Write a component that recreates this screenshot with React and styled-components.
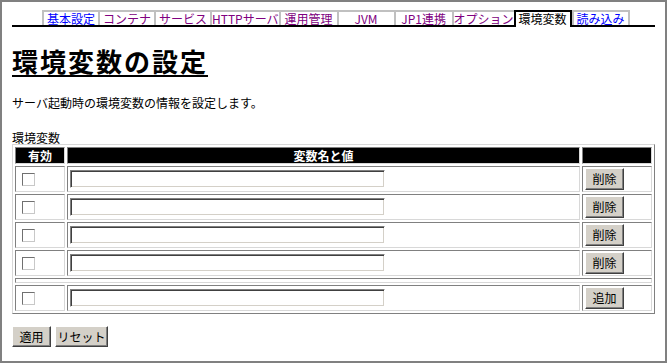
import styled, { createGlobalStyle } from 'styled-components';

const GlobalStyle = createGlobalStyle`
  html, body {
    margin: 0;
    padding: 0;
    background: #fff;
  }
  body {
    font-family: 'Noto Sans CJK JP', 'DejaVu Sans', sans-serif;
    font-size: 12px;
    color: #000;
  }
`;

const tabs = [
  { label: '基本設定', width: 56, kind: 'link' },
  { label: 'コンテナ', width: 56, kind: 'visited' },
  { label: 'サービス', width: 56, kind: 'visited' },
  { label: 'HTTPサーバ', width: 67, kind: 'visited' },
  { label: '運用管理', width: 58, kind: 'visited' },
  { label: 'JVM', width: 57, kind: 'visited' },
  { label: 'JP1連携', width: 58, kind: 'visited' },
  { label: 'オプション', width: 59, kind: 'visited' },
  { label: '環境変数', width: 58, kind: 'active' },
  { label: '読み込み', width: 58, kind: 'link', last: true },
];

const tabColors = {
  link: '#0000ff',
  visited: '#800080',
  active: '#000000',
};

const rows = [1, 2, 3, 4];

const App = () => {
  return (
    <Page>
      <GlobalStyle />
      <TabBar>
        {tabs.map((t) => (
          <Tab
            key={t.label}
            $width={t.width}
            $active={t.kind === 'active'}
            $last={t.last}
            $color={tabColors[t.kind]}
          >
            {t.label}
          </Tab>
        ))}
      </TabBar>

      <Heading>環境変数の設定</Heading>
      <Description>サーバ起動時の環境変数の情報を設定します。</Description>
      <Label>環境変数</Label>

      <VarTable>
        <thead>
          <tr>
            <HeadCell $width={50}>有効</HeadCell>
            <HeadCell $width={513}>変数名と値</HeadCell>
            <HeadCell $width={70}></HeadCell>
          </tr>
        </thead>
        <tbody>
          {rows.map((r) => (
            <tr key={r}>
              <Cell>
                <Check type="checkbox" />
              </Cell>
              <Cell>
                <TextInput type="text" />
              </Cell>
              <Cell>
                <Button $width={39}>削除</Button>
              </Cell>
            </tr>
          ))}
          <tr>
            <SpacerCell colSpan={3} />
          </tr>
          <tr>
            <Cell>
              <Check type="checkbox" />
            </Cell>
            <Cell>
              <TextInput type="text" />
            </Cell>
            <Cell>
              <Button $width={39}>追加</Button>
            </Cell>
          </tr>
        </tbody>
      </VarTable>

      <Actions>
        <Button $width={39}>適用</Button>
        <Button $width={53}>リセット</Button>
      </Actions>
    </Page>
  );
};

const Page = styled.div`
  box-sizing: border-box;
  width: 667px;
  height: 363px;
  border: 2px solid #808080;
  padding: 10px 0 0 10px;
  overflow: hidden;
`;

const TabBar = styled.div`
  display: flex;
  align-items: flex-end;
  width: 643px;
  height: 15px;
  padding-left: 30px;
  box-sizing: border-box;
  border-bottom: 2px solid #000;
`;

const Tab = styled.div`
  box-sizing: border-box;
  flex: 0 0 ${(p) => p.$width}px;
  height: ${(p) => (p.$active ? 17 : 15)}px;
  margin-bottom: ${(p) => (p.$active ? -2 : 0)}px;
  border-top: 2px solid ${(p) => (p.$active ? '#000' : '#c0c0c0')};
  border-left: 2px solid ${(p) => (p.$active ? '#000' : '#c0c0c0')};
  border-right: ${(p) =>
    p.$active ? '2px solid #000' : p.$last ? '2px solid #c0c0c0' : 'none'};
  background: #fff;
  color: ${(p) => p.$color};
  font-size: 12px;
  line-height: 13px;
  text-align: center;
  white-space: nowrap;
  cursor: ${(p) => (p.$active ? 'default' : 'pointer')};
`;

const Heading = styled.h1`
  margin: 18px 0 0;
  font-size: 26px;
  line-height: 32px;
  font-weight: bold;
  letter-spacing: 2px;
  text-decoration: underline;
  text-underline-offset: 3px;
  text-decoration-thickness: 2px;
`;

const Description = styled.p`
  margin: 18px 0 0;
  font-size: 12px;
  line-height: 16px;
`;

const Label = styled.div`
  margin-top: 20px;
  font-size: 12px;
  line-height: 13px;
`;

const VarTable = styled.table`
  margin-top: 0;
  width: 643px;
  border-collapse: separate;
  border-spacing: 2px;
  border: 1px solid;
  border-color: #d8d8d8 #808080 #808080 #d8d8d8;
  table-layout: fixed;
`;

const HeadCell = styled.th`
  box-sizing: border-box;
  width: ${(p) => p.$width}px;
  height: 17px;
  padding: 0;
  background: #000;
  color: #fff;
  font-size: 12px;
  font-weight: bold;
  line-height: 15px;
  text-align: center;
  border: 1px solid;
  border-color: #808080 #d8d8d8 #d8d8d8 #808080;
`;

const Cell = styled.td`
  box-sizing: border-box;
  height: 26px;
  padding: 1px;
  vertical-align: middle;
  border: 1px solid;
  border-color: #808080 #d8d8d8 #d8d8d8 #808080;
`;

const SpacerCell = styled.td`
  box-sizing: border-box;
  height: 5px;
  padding: 0;
  border: 1px solid;
  border-color: #808080 #d8d8d8 #d8d8d8 #808080;
`;

const Check = styled.input`
  appearance: none;
  display: block;
  box-sizing: border-box;
  width: 13px;
  height: 13px;
  margin: 0 0 0 5px;
  background: #fff;
  border: 1px solid;
  border-color: #707070 #c8c8c8 #c8c8c8 #707070;
`;

const TextInput = styled.input`
  display: block;
  box-sizing: border-box;
  width: 315px;
  height: 18px;
  margin: 0 0 0 1px;
  padding: 0 2px;
  background: #fff;
  border: 1px solid;
  border-color: #808080 #ffffff #ffffff #808080;
  box-shadow: inset 1px 1px 0 #404040, inset -1px -1px 0 #d4d0c8;
  font: 12px 'Noto Sans CJK JP', sans-serif;
  outline: none;
`;

const Button = styled.button`
  display: block;
  box-sizing: border-box;
  width: ${(p) => p.$width}px;
  height: 22px;
  margin: 0 0 0 1px;
  padding: 0;
  background: #d4d0c8;
  color: #000;
  border: 1px solid;
  border-color: #ffffff #404040 #404040 #ffffff;
  box-shadow: inset -1px -1px 0 #808080;
  font: 12px 'Noto Sans CJK JP', sans-serif;
  line-height: 18px;
  text-align: center;
  white-space: nowrap;
  overflow: hidden;
  cursor: pointer;
`;

const Actions = styled.div`
  display: flex;
  gap: 4px;
  margin-top: 12px;

  & > button {
    margin: 0;
    height: 21px;
  }
`;

export default App;
